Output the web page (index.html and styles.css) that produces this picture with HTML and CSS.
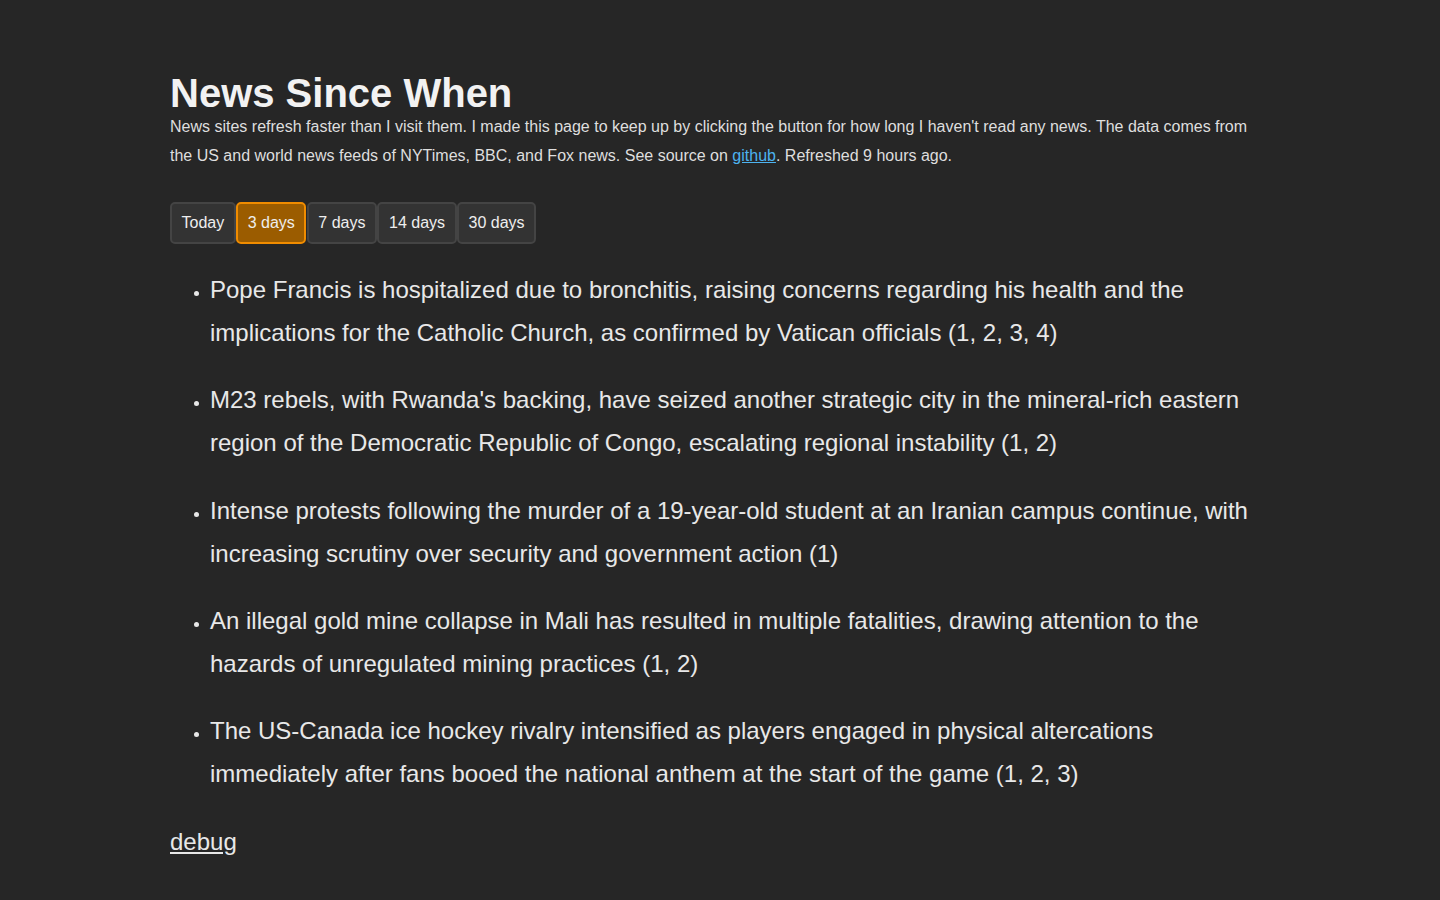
FILE: index.html
```html
<!DOCTYPE html>
<html lang="en">
<head>
<meta charset="utf-8">
<title>News Since When</title>
<link rel="stylesheet" href="styles.css">
</head>
<body>
<main class="page">
  <h1 class="title">News Since When</h1>
  <p class="intro">News sites refresh faster than I visit them. I made this page to keep up by clicking the button for how long I haven't read any news. The data comes from the US and world news feeds of NYTimes, BBC, and Fox news. See source on <a class="link" href="#">github</a>. Refreshed 9 hours ago.</p>
  <div class="ranges">
    <button class="range">Today</button>
    <button class="range active">3 days</button>
    <button class="range">7 days</button>
    <button class="range">14 days</button>
    <button class="range">30 days</button>
  </div>
  <ul class="stories">
    <li class="story">Pope Francis is hospitalized due to bronchitis, raising concerns regarding his health and the implications for the Catholic Church, as confirmed by Vatican officials (1, 2, 3, 4)</li>
    <li class="story">M23 rebels, with Rwanda's backing, have seized another strategic city in the mineral-rich eastern region of the Democratic Republic of Congo, escalating regional instability (1, 2)</li>
    <li class="story">Intense protests following the murder of a 19-year-old student at an Iranian campus continue, with increasing scrutiny over security and government action (1)</li>
    <li class="story">An illegal gold mine collapse in Mali has resulted in multiple fatalities, drawing attention to the hazards of unregulated mining practices (1, 2)</li>
    <li class="story">The US-Canada ice hockey rivalry intensified as players engaged in physical altercations immediately after fans booed the national anthem at the start of the game (1, 2, 3)</li>
  </ul>
  <a class="debug" href="#">debug</a>
</main>
</body>
</html>
```
FILE: styles.css
```css
html, body {
  margin: 0;
  padding: 0;
  background: #262626;
}
body {
  font-family: "Liberation Sans", Arial, sans-serif;
  color: #e8e8e8;
  line-height: 1.8;
}
.page {
  max-width: 1100px;
  margin: 0 auto;
  padding-top: 73px;
}
.title {
  font-size: 40px;
  font-weight: bold;
  line-height: 40px;
  margin: 0;
  color: #f2f2f2;
}
.intro {
  font-size: 16px;
  margin: 0;
  color: #dedede;
}
.link {
  color: #4db3f0;
}
.ranges {
  display: flex;
  gap: 0.5px;
  margin-top: 31px;
}
.range {
  font-family: "Liberation Sans", Arial, sans-serif;
  font-size: 16px;
  line-height: 1.2;
  padding: 9.5px 9.5px;
  border: 2px solid #444444;
  border-radius: 5px;
  background: #333333;
  color: #eeeeee;
  cursor: pointer;
}
.range.active {
  background: #9b5c00;
  border-color: #f08c00;
}
.stories {
  font-size: 24px;
  margin: 24px 0;
  padding-left: 40px;
}
.story {
  margin-bottom: 24px;
}
.story::marker {
  font-size: 15px;
}
.debug {
  font-size: 24px;
  color: #e8e8e8;
  display: inline-block;
}
```
